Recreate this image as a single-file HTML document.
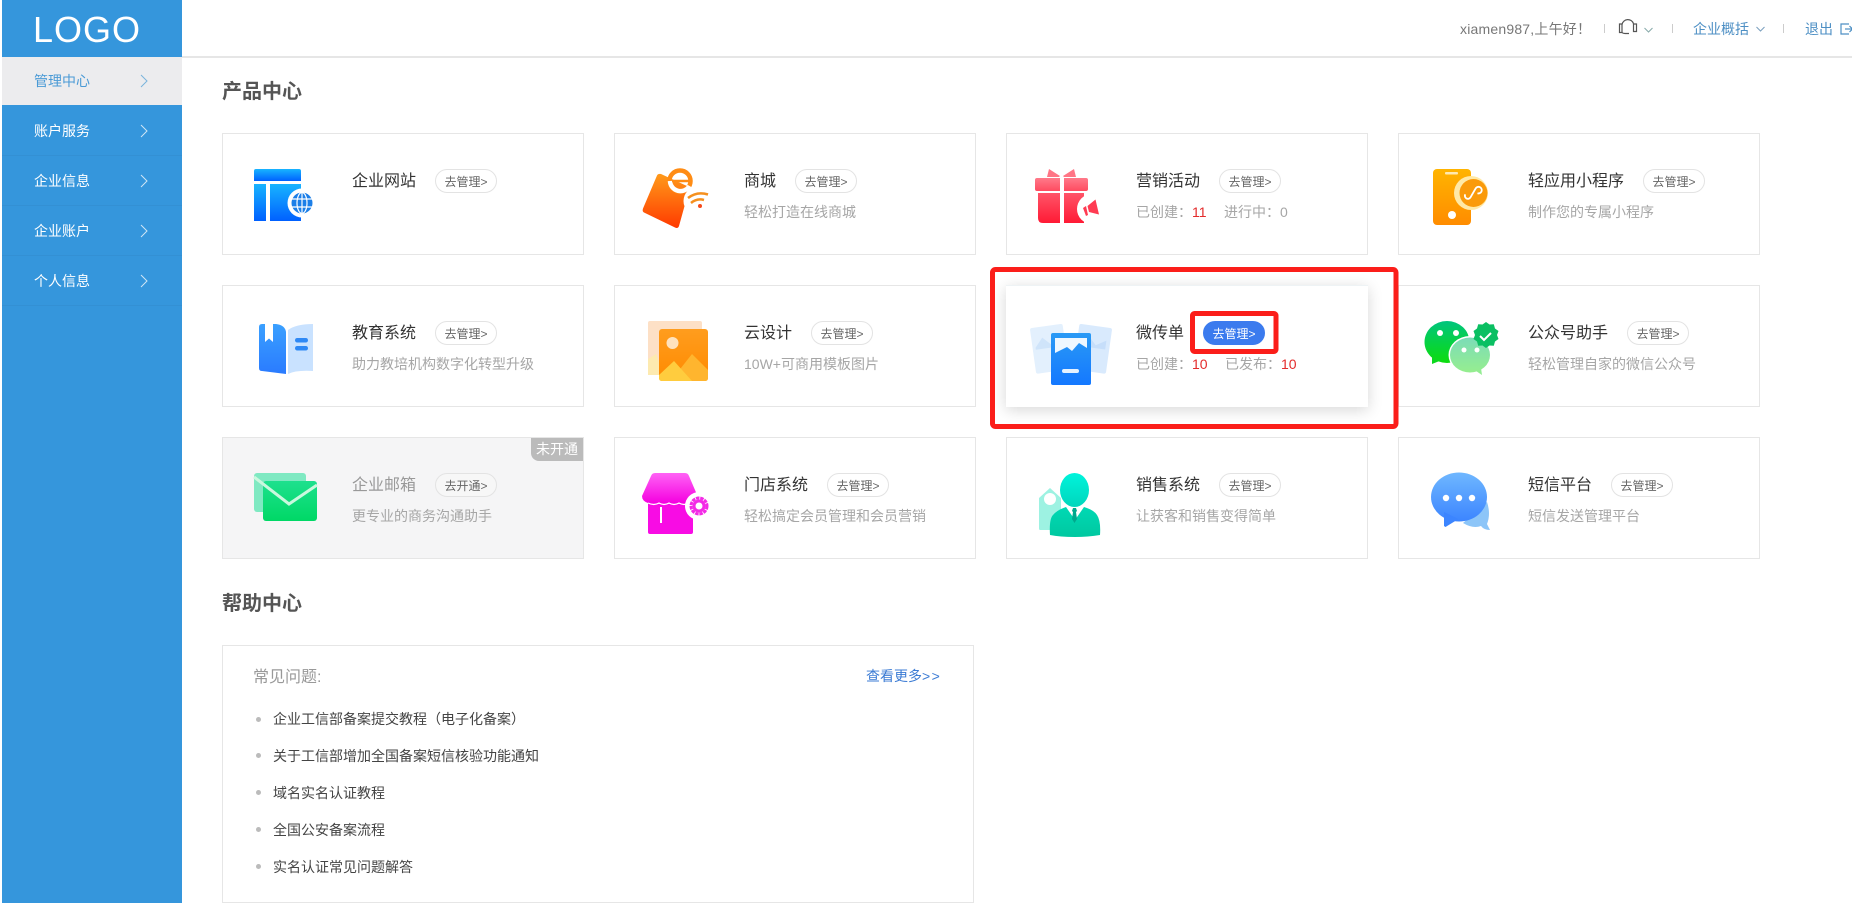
<!DOCTYPE html>
<html lang="zh-CN">
<head>
<meta charset="utf-8">
<title>管理中心</title>
<style>
*{box-sizing:border-box;margin:0;padding:0}
html,body{width:1852px;height:903px;overflow:hidden;background:#fff}
body{position:relative;font-family:"Liberation Sans","Noto Sans CJK SC",sans-serif;font-size:14px;color:#333}
.a{position:absolute;white-space:nowrap}
#side{position:absolute;left:2px;top:0;width:180px;height:903px;background:#3596dc}
#logo{position:absolute;left:31px;top:8px;font-size:36px;line-height:44px;color:#fff;letter-spacing:1px}
.m{position:absolute;left:0;width:180px;color:#fff;font-size:14px;line-height:50px;height:50px;padding-left:32px;border-bottom:1px solid rgba(0,0,0,.035)}
.m.on{background:#ececee;color:#4a9ad6;height:48px;line-height:48px;border:0}
#hd{position:absolute;left:182px;top:56px;width:1670px;height:2px;background:#e6e6e6}
.sep{position:absolute;top:24px;width:1px;height:9px;background:#ccc}
.h2{position:absolute;left:222px;font-size:20px;font-weight:700;line-height:28px;color:#555}
.c{position:absolute;width:362px;height:122px;border:1px solid #e6e6e6;background:#fff}
.c.off{background:#f5f5f6}
.c.hot{border:0;box-shadow:0 3px 14px rgba(0,0,0,.16);border-top:1px solid #eef3f5}
.t{position:absolute;left:129px;top:36px;height:24px;display:flex;align-items:center;font-size:16px;line-height:24px;color:#333;white-space:nowrap}
.off .t{color:#999}
.p{display:inline-block;margin-left:19px;margin-top:-2px;width:62px;height:24px;border:1px solid #e3e3e3;border-radius:12px;font-size:12px;line-height:24px;text-align:center;color:#666;background:#fff}
.off .p{background:#f7f7f7}
.p.b{background:#3b7bee;border-color:#3b7bee;color:#fff}
.d{position:absolute;left:129px;top:67px;font-size:14px;line-height:22px;color:#a6a6a6;white-space:nowrap}
.d i{font-style:normal;color:#e32b2b}
.d span{position:absolute;top:0}
.tag{position:absolute;right:0;top:0;width:52px;height:23px;background:#bbb;color:#fff;border-radius:0 0 0 8px;font-size:14px;line-height:23px;text-align:center}
#help{position:absolute;left:222px;top:645px;width:752px;height:258px;border:1px solid #e6e6e6}
.li{position:absolute;left:273px;font-size:14px;line-height:22px;color:#444;white-space:nowrap}
.dot{position:absolute;left:256px;width:5px;height:5px;border-radius:50%;background:#bbb}
svg#ov{position:absolute;left:0;top:0;z-index:5}
</style>
</head>
<body>
<div id="side">
  <div id="logo">LOGO</div>
  <div class="m on" style="top:57px">管理中心</div>
  <div class="m" style="top:106px">账户服务</div>
  <div class="m" style="top:156px">企业信息</div>
  <div class="m" style="top:206px">企业账户</div>
  <div class="m" style="top:256px">个人信息</div>
</div>
<div id="hd"></div>

<div class="a" style="left:1460px;top:18px;line-height:22px;color:#777;letter-spacing:.2px">xiamen987,上午好！</div>
<div class="sep" style="left:1604px"></div>
<div class="sep" style="left:1672px"></div>
<div class="a" style="left:1693px;top:18px;line-height:22px;color:#4d8fc4">企业概括</div>
<div class="sep" style="left:1783px"></div>
<div class="a" style="left:1805px;top:18px;line-height:22px;color:#4d8fc4">退出</div>

<div class="h2" style="top:78px">产品中心</div>

<div class="c" style="left:222px;top:133px"><div class="t">企业网站<span class="p">去管理&gt;</span></div></div>
<div class="c" style="left:614px;top:133px"><div class="t">商城<span class="p">去管理&gt;</span></div><div class="d">轻松打造在线商城</div></div>
<div class="c" style="left:1006px;top:133px"><div class="t">营销活动<span class="p">去管理&gt;</span></div><div class="d">已创建：<i>11</i><span style="left:88px">进行中：0</span></div></div>
<div class="c" style="left:1398px;top:133px"><div class="t">轻应用小程序<span class="p">去管理&gt;</span></div><div class="d">制作您的专属小程序</div></div>

<div class="c" style="left:222px;top:285px"><div class="t">教育系统<span class="p">去管理&gt;</span></div><div class="d">助力教培机构数字化转型升级</div></div>
<div class="c" style="left:614px;top:285px"><div class="t">云设计<span class="p">去管理&gt;</span></div><div class="d">10W+可商用模板图片</div></div>
<div class="c hot" style="left:1006px;top:285px"><div class="t" style="left:130px;top:36px">微传单<span class="p b">去管理&gt;</span></div><div class="d" style="left:130px;top:67px">已创建：<i>10</i><span style="left:89px">已发布：<i>10</i></span></div></div>
<div class="c" style="left:1398px;top:285px"><div class="t">公众号助手<span class="p">去管理&gt;</span></div><div class="d">轻松管理自家的微信公众号</div></div>

<div class="c off" style="left:222px;top:437px"><div class="tag">未开通</div><div class="t">企业邮箱<span class="p">去开通&gt;</span></div><div class="d">更专业的商务沟通助手</div></div>
<div class="c" style="left:614px;top:437px"><div class="t">门店系统<span class="p">去管理&gt;</span></div><div class="d">轻松搞定会员管理和会员营销</div></div>
<div class="c" style="left:1006px;top:437px"><div class="t">销售系统<span class="p">去管理&gt;</span></div><div class="d">让获客和销售变得简单</div></div>
<div class="c" style="left:1398px;top:437px"><div class="t">短信平台<span class="p">去管理&gt;</span></div><div class="d">短信发送管理平台</div></div>

<div class="h2" style="top:590px">帮助中心</div>
<div id="help"></div>
<div class="a" style="left:253px;top:667px;font-size:16px;line-height:22px;color:#999">常见问题:</div>
<div class="a" style="left:866px;top:665px;line-height:22px;color:#3b7bd4">查看更多<span style="letter-spacing:1.5px">&gt;&gt;</span></div>
<div class="dot" style="top:717px"></div><div class="li" style="top:708px">企业工信部备案提交教程（电子化备案）</div>
<div class="dot" style="top:753px"></div><div class="li" style="top:745px">关于工信部增加全国备案短信核验功能通知</div>
<div class="dot" style="top:790px"></div><div class="li" style="top:782px">域名实名认证教程</div>
<div class="dot" style="top:827px"></div><div class="li" style="top:819px">全国公安备案流程</div>
<div class="dot" style="top:864px"></div><div class="li" style="top:856px">实名认证常见问题解答</div>

<svg id="ov" width="1852" height="903" viewBox="0 0 1852 903" xmlns="http://www.w3.org/2000/svg">
<defs>
<linearGradient id="gBlue" x1="0" y1="0" x2="0" y2="1"><stop offset="0" stop-color="#18b4ff"/><stop offset="1" stop-color="#0060ff"/></linearGradient>
<linearGradient id="gBag" x1="0" y1="0" x2="0" y2="1"><stop offset="0" stop-color="#ff9a1a"/><stop offset="1" stop-color="#ff3a00"/></linearGradient>
<linearGradient id="gGiftT" x1="0" y1="0" x2="0" y2="1"><stop offset="0" stop-color="#ff7a8a"/><stop offset="1" stop-color="#ff4b60"/></linearGradient>
<linearGradient id="gGift" x1="0" y1="0" x2="0" y2="1"><stop offset="0" stop-color="#ff5468"/><stop offset="1" stop-color="#ff1a35"/></linearGradient>
<linearGradient id="gPhone" x1="0" y1="0" x2="0" y2="1"><stop offset="0" stop-color="#ffb400"/><stop offset="1" stop-color="#ff8c00"/></linearGradient>
<linearGradient id="gBook" x1="0" y1="0" x2="0" y2="1"><stop offset="0" stop-color="#3aa0ff"/><stop offset="1" stop-color="#2a7bff"/></linearGradient>
<linearGradient id="gPic" x1="0" y1="0" x2="0" y2="1"><stop offset="0" stop-color="#ff9d1e"/><stop offset="1" stop-color="#ff8a00"/></linearGradient>
<linearGradient id="gMini" x1="0" y1="0" x2="0" y2="1"><stop offset="0" stop-color="#2a9af5"/><stop offset="1" stop-color="#1478ff"/></linearGradient>
<linearGradient id="gWx1" x1="0" y1="0" x2="0" y2="1"><stop offset="0" stop-color="#00c47e"/><stop offset="1" stop-color="#0cdd0c"/></linearGradient>
<linearGradient id="gWx2" x1="0" y1="0" x2="0" y2="1"><stop offset="0" stop-color="#7bdcb8"/><stop offset="1" stop-color="#96ee8f"/></linearGradient>
<linearGradient id="gMail" x1="0" y1="0" x2="0" y2="1"><stop offset="0" stop-color="#1ee08e"/><stop offset="1" stop-color="#00d866"/></linearGradient>
<linearGradient id="gStore" x1="0" y1="0" x2="0" y2="1"><stop offset="0" stop-color="#ff63f5"/><stop offset="1" stop-color="#f500e0"/></linearGradient>
<linearGradient id="gHead" x1="0" y1="0" x2="0" y2="1"><stop offset="0" stop-color="#00f4dc"/><stop offset="1" stop-color="#00d6bc"/></linearGradient>
<linearGradient id="gBody" x1="0" y1="0" x2="0" y2="1"><stop offset="0" stop-color="#00d9b4"/><stop offset="1" stop-color="#00c8a0"/></linearGradient>
<linearGradient id="gSms" x1="0" y1="0" x2="0" y2="1"><stop offset="0" stop-color="#6fb7ff"/><stop offset="1" stop-color="#3c85ff"/></linearGradient>
</defs>

<!-- sidebar chevrons -->
<g fill="none" stroke-width="1">
<path d="M141 75l6 6-6 6" stroke="#7ab4dc"/>
<path d="M141 125l6 6-6 6" stroke="#cfe6f6"/>
<path d="M141 175l6 6-6 6" stroke="#cfe6f6"/>
<path d="M141 225l6 6-6 6" stroke="#cfe6f6"/>
<path d="M141 275l6 6-6 6" stroke="#cfe6f6"/>
</g>

<!-- header icons -->
<g fill="none" stroke="#555" stroke-width="1.200">
<path d="M1622 24.500a6 6 0 0 1 11.500-1"/>
<path d="M1622 24h-2.500v8.500h2.500z"/>
<path d="M1633.500 24h3v7.500h-3z"/>
<path d="M1622 32.500q1 1 3 1h4"/>
</g>
<path d="M1644.500 28l4 4 4-4" fill="none" stroke="#8aa" stroke-width="1"/>
<path d="M1756.500 27l4 4 4-4" fill="none" stroke="#7a9fbe" stroke-width="1"/>
<g fill="none" stroke="#4d8fc4" stroke-width="1.200">
<path d="M1849 24h-8v10h8"/><path d="M1845 29h7"/><path d="M1849.500 26l3 3-3 3"/>
</g>

<!-- website -->
<path d="M254 171a2 2 0 0 1 2-2h43a2 2 0 0 1 2 2v10h-47z" fill="url(#gBlue)"/>
<rect x="254" y="184" width="12" height="37" fill="url(#gBlue)"/>
<rect x="270" y="184" width="31" height="37" fill="url(#gBlue)"/>
<circle cx="302" cy="203" r="14.500" fill="#fff"/>
<circle cx="302" cy="203" r="10.500" fill="#1c7fe8"/>
<g fill="none" stroke="#fff" stroke-width="1.200"><ellipse cx="302" cy="203" rx="5" ry="10.500"/><path d="M302 192.500v21M292 199h20M292 207h20"/></g>

<!-- shop bag -->
<path d="M661 174l26 12q3 1 2 4l-10 36q-1 3-4 1.500l-31-15q-2-1-1-4l14-33q1-2 4-1.500z" fill="url(#gBag)"/>
<circle cx="680" cy="181" r="10.500" fill="none" stroke="#ff8c14" stroke-width="4.500"/>
<path d="M670 181a10.500 10.500 0 0 0 19.500 5" fill="none" stroke="#fff" stroke-width="4.500"/>
<path d="M672 181h17" stroke="#ff8c14" stroke-width="2.500"/>
<circle cx="698" cy="201" r="14.500" fill="#fff"/>
<g fill="none" stroke="#f5901e" stroke-width="2.500"><path d="M688 198q9-7 20-3.500"/><path d="M691 203q6-5 13-3"/></g>
<circle cx="700" cy="206" r="2" fill="#f6491a"/>

<!-- gift -->
<path d="M1049 169l11 7-1 1h-12z M1074 169l-11 7 1 1h12z" fill="#ff7585"/>
<path d="M1037 178h23v13h-23q-2 0-2-2v-9q0-2 2-2z M1064 178h22q2 0 2 2v9q0 2-2 2h-22z" fill="url(#gGiftT)"/>
<path d="M1038 193h22v30h-17q-5 0-5-5z M1064 193h20v30h-20z" fill="url(#gGift)"/>
<circle cx="1092" cy="209" r="15" fill="#fff"/>
<path d="M1083 208l3 8 2-1-2-9z M1087.500 206l8-6.500 3.500 15-10-2.500z" fill="#ff3b52"/>

<!-- phone mini -->
<rect x="1433" y="169" width="38" height="56" rx="4" fill="url(#gPhone)"/>
<rect x="1445" y="172" width="13" height="2.500" rx="1" fill="#ffe9b0"/>
<circle cx="1452" cy="215" r="4" fill="#fff"/>
<circle cx="1471" cy="193" r="17" fill="#ffe9a6"/>
<circle cx="1473.500" cy="193" r="14" fill="#fa9a0a"/>
<path d="M1467 198a3 3 0 1 0 6 0v-10a3.300 3.300 0 1 1 4 3" fill="none" stroke="#fff" stroke-width="1.800" transform="rotate(30 1473 193)"/>

<!-- book -->
<path d="M259 327q0-3 3-3h14q9 1 10 8v42l-24-3q-3 0-3-3z" fill="url(#gBook)"/>
<path d="M265 324h8v18l-4-3.500-4 3.500z" fill="#fff"/>
<path d="M288 330q8-6 25-6v47q-17-1-25 3z" fill="#c9e2ff"/>
<rect x="295" y="338" width="13" height="4.500" rx="2.200" fill="#2f89f5"/>
<rect x="295" y="346" width="13" height="4.500" rx="2.200" fill="#2f89f5"/>

<!-- picture -->
<rect x="648" y="321" width="54" height="54" rx="2" fill="#fde0c6"/>
<path d="M648 375v-16l8-5 8 21z" fill="#fdeab0"/>
<rect x="659" y="329" width="49" height="52" rx="3" fill="url(#gPic)"/>
<circle cx="672.500" cy="343" r="6" fill="#ffe2bd"/>
<path d="M692 354l16 16v8q0 3-3 3h-25l-3-8z" fill="#ffb52e"/>
<path d="M674 361l18 20h-30q-3 0-3-3v-3z" fill="#ffcc3e"/>

<!-- micro flyer -->
<g transform="rotate(-8 1048 350)">
<rect x="1033" y="326" width="33" height="46" rx="2" fill="#e3f0fd"/>
<path d="M1036 346l8-9 8 8 9-5v8h-25z" fill="#cfe4fa"/>
</g>
<g transform="rotate(8 1094 350)">
<rect x="1076" y="326" width="33" height="46" rx="2" fill="#d9eafd"/>
<path d="M1079 346l8-9 8 8 10-6v9h-26z" fill="#c6defa"/>
</g>
<rect x="1051" y="333" width="40" height="52" rx="2" fill="url(#gMini)"/>
<path d="M1055 338h32v10l-8-5-7 8-5-4-12 6z" fill="#eef7ff"/>
<rect x="1062" y="369" width="17" height="4" rx="2" fill="#e6f2ff"/>

<!-- wechat -->
<ellipse cx="1447" cy="342" rx="22.500" ry="21" fill="url(#gWx1)"/>
<path d="M1432 355l0 9 10-4z" fill="#0cd81e"/>
<ellipse cx="1470" cy="355" rx="21.500" ry="19" fill="#fff"/>
<ellipse cx="1470" cy="355" rx="20" ry="17.500" fill="url(#gWx2)"/>
<path d="M1476 371l6 4-1-7z" fill="#94ec93"/>
<circle cx="1440" cy="333" r="3" fill="#fff"/><circle cx="1456" cy="333" r="3" fill="#fff"/>
<circle cx="1464" cy="350" r="2.500" fill="#fff"/><circle cx="1477" cy="350" r="2.500" fill="#fff"/>
<path d="M1486 324l3.500 2.500 4.300-.2 1.200 4.200 3.500 2.500-1.500 4 1.500 4-3.500 2.500-1.200 4.200-4.300-.2-3.500 2.500-3.500-2.500-4.300.2-1.200-4.200-3.500-2.500 1.500-4-1.500-4 3.500-2.500 1.200-4.200 4.300.2z" fill="#0abf62" transform="translate(0 -2)"/>
<path d="M1480 336l4 4 7-7" fill="none" stroke="#fff" stroke-width="2"/>

<!-- mail -->
<rect x="254" y="473" width="52" height="39" rx="3" fill="#7fe9c2"/>
<rect x="263" y="481" width="54" height="40" rx="3" fill="url(#gMail)"/>
<path d="M254 477l35 27 28-19" fill="none" stroke="#caf8de" stroke-width="3"/>

<!-- store -->
<path d="M648 500h45v32a2 2 0 0 1-2 2h-41a2 2 0 0 1-2-2z" fill="#f80ce4"/>
<path d="M655 473h30q3 0 4 3l9 21q0 4-5 6l-45 0q-6-2-6-7l9-20q1-3 4-3z" fill="url(#gStore)"/>
<path d="M648 503q6 3 11 0 5 3 10 0 5 3 10 0 5 3 10 0" fill="none" stroke="#fff" stroke-width="1.200"/>
<rect x="660" y="507" width="2" height="16" fill="#fff"/>
<circle cx="699" cy="506" r="14" fill="#fff"/>
<circle cx="699" cy="506" r="8" fill="none" stroke="#f32ae6" stroke-width="3" stroke-dasharray="3.500 .8"/>
<circle cx="699" cy="506" r="6.500" fill="#f32ae6"/>
<circle cx="699" cy="506" r="3.500" fill="#fff"/>

<!-- sales -->
<path d="M1050 488l11 10v22l-9 10h-12q-1 0-1-2v-30z" fill="#9df2e2"/>
<circle cx="1050" cy="499" r="6" fill="#fff"/>
<path d="M1050 535q-1-16 3-20 4-5 13-8l9 13 9-13q10 3 13 8 4 6 3 20-12 2-25 2-15 0-25-2z" fill="url(#gBody)"/>
<ellipse cx="1074.500" cy="490" rx="14.500" ry="17" fill="url(#gHead)"/>
<path d="M1073 508h3l1 3-1 1 1 7-2.500 4-2.500-4 1-7-1-1z" fill="#00a98d"/>

<!-- sms -->
<path d="M1487 502q4 12 0 22l3 6q-6 0-9-4-8 3-18-3z" fill="#8cc5f8"/>
<ellipse cx="1459" cy="497" rx="28" ry="24.500" fill="url(#gSms)"/>
<path d="M1444 512v14l1.500 1 13-8z" fill="#3c85ff"/>
<circle cx="1446" cy="498" r="3.200" fill="#fff"/><circle cx="1459" cy="498" r="3.200" fill="#fff"/><circle cx="1472" cy="498" r="3.200" fill="#fff"/>

<!-- red annotation -->
<rect x="992.500" y="269.500" width="403.500" height="157" rx="3" fill="none" stroke="#fb1e1a" stroke-width="5"/>
<rect x="1192.500" y="313.500" width="83.500" height="38" rx="2" fill="none" stroke="#fb1e1a" stroke-width="5"/>
</svg>
</body>
</html>
